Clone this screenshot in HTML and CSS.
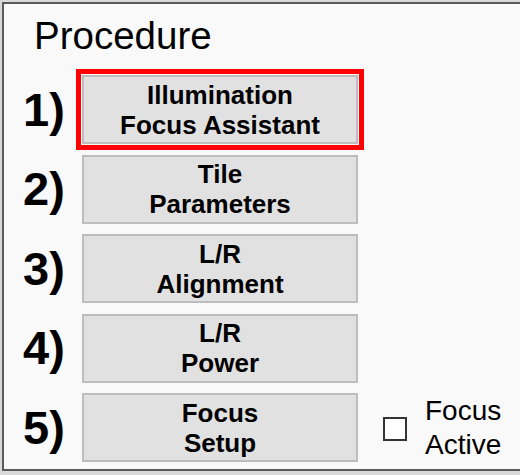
FILE: index.html
```html
<!DOCTYPE html>
<html>
<head>
<meta charset="utf-8">
<link rel="stylesheet" href="styles.css">
</head>
<body>
<div class="panel">
  <div class="title">Procedure</div>
  <div class="steps">
    <div class="num">1)</div>
    <button class="step selected">Illumination<br>Focus Assistant</button>
    <div class="num">2)</div>
    <button class="step">Tile<br>Parameters</button>
    <div class="num">3)</div>
    <button class="step">L/R<br>Alignment</button>
    <div class="num">4)</div>
    <button class="step">L/R<br>Power</button>
    <div class="num">5)</div>
    <button class="step">Focus<br>Setup</button>
    <label class="check">
      <span class="box"></span>
      <span class="check-text">Focus<br>Active</span>
    </label>
  </div>
</div>
</body>
</html>
```

FILE: styles.css
```css
html, body {
  margin: 0;
  padding: 0;
}
body {
  width: 520px;
  height: 475px;
  background: #d9d9d9;
  overflow: hidden;
  font-family: "Liberation Sans", Arial, sans-serif;
  color: #000;
}
.panel {
  box-sizing: border-box;
  margin: 2px 0 0 2px;
  height: 469px;
  border: 2px solid #5a5a5a;
  border-right: none;
  background: #f9f9f9;
  padding: 11px 0 0 0;
}
.title {
  font-size: 38.5px;
  line-height: 42px;
  padding-left: 30px;
  margin-bottom: 18px;
}
.steps {
  display: grid;
  grid-template-columns: 61px 276px auto;
  grid-auto-rows: 69px;
  row-gap: 10.5px;
  padding-left: 17px;
  align-items: center;
}
.num {
  grid-column: 1;
  padding-left: 2px;
  font-size: 47px;
  font-weight: bold;
  line-height: 50px;
}
.step {
  grid-column: 2;
  box-sizing: border-box;
  height: 69px;
  width: 276px;
  margin: 0;
  padding: 0;
  background: #e1e1e1;
  border: 2px solid #bdbdbd;
  font-family: "Liberation Sans", Arial, sans-serif;
  font-weight: bold;
  font-size: 26px;
  line-height: 30px;
  color: #000;
  text-align: center;
}
.step.selected {
  outline: 5px solid #ff0000;
  outline-offset: 1px;
}
.check {
  grid-column: 3;
  grid-row: 5;
  display: flex;
  align-items: center;
  gap: 18px;
  margin-left: 25px;
}
.box {
  box-sizing: border-box;
  width: 24px;
  height: 24px;
  border: 2px solid #333;
  background: #fff;
  margin-top: 2px;
}
.check-text {
  font-size: 28px;
  line-height: 34px;
}
```
